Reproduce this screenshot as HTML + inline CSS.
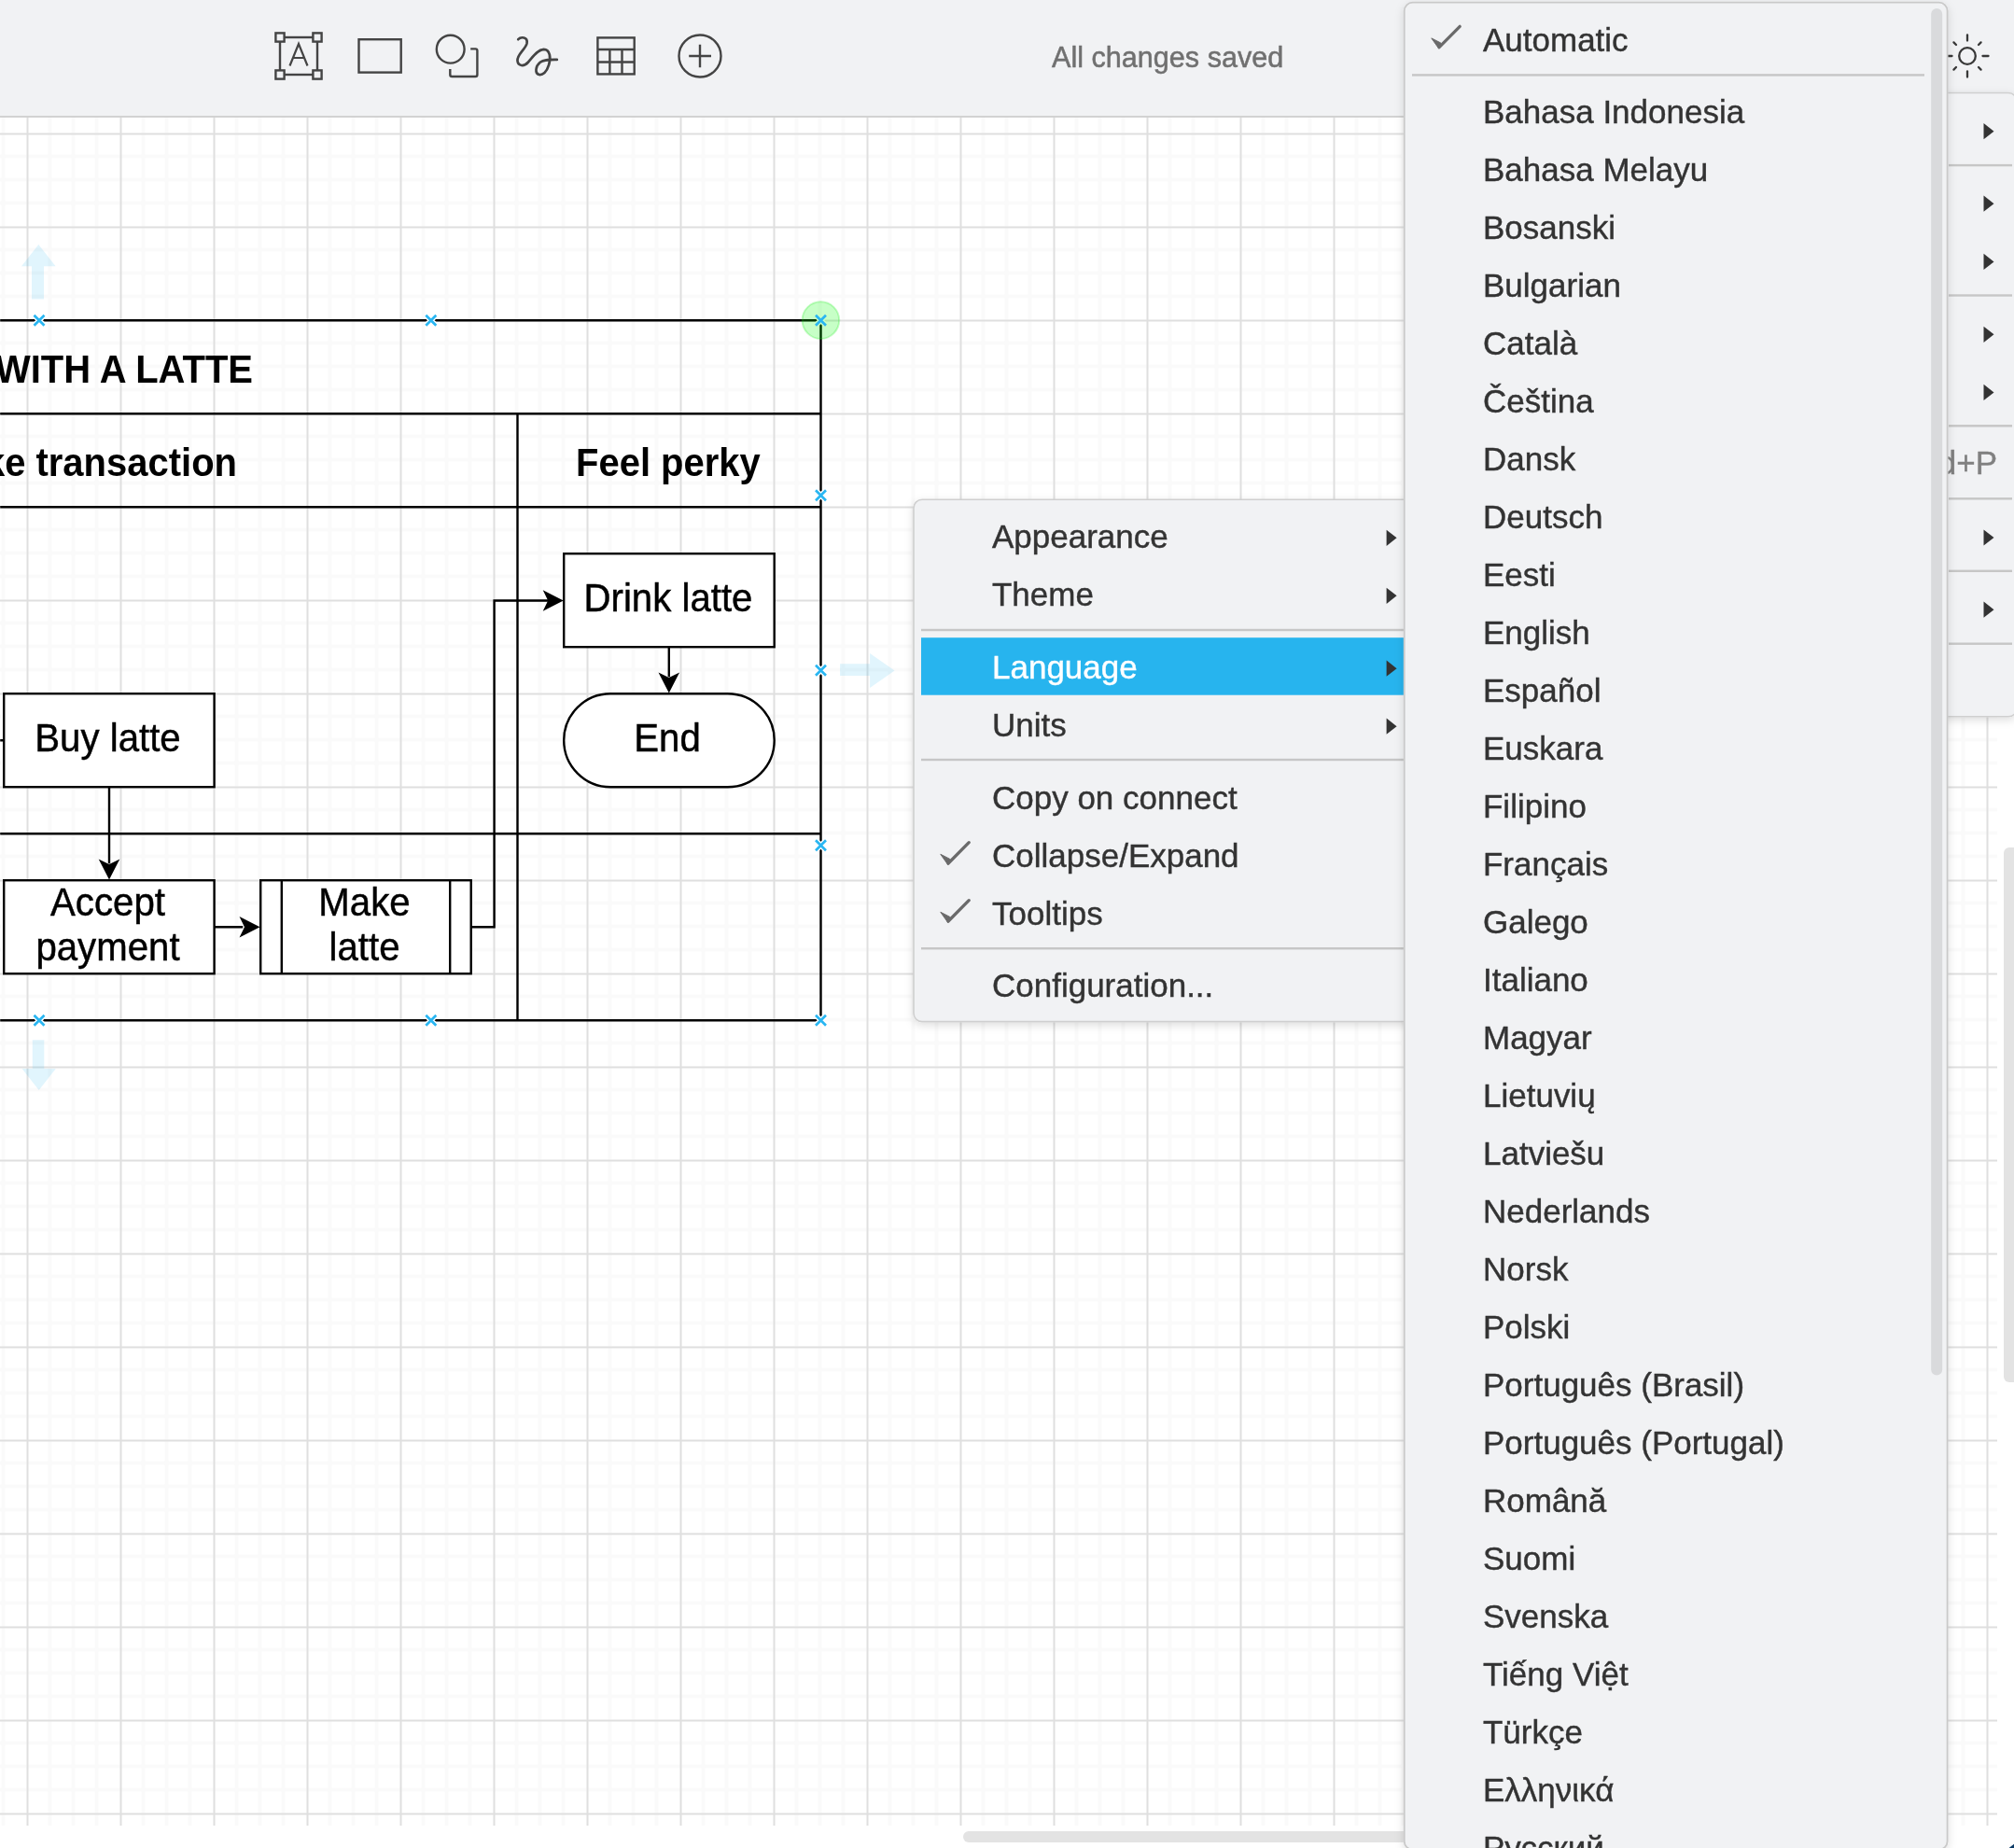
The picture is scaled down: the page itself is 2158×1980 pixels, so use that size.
<!DOCTYPE html><html><head><meta charset="utf-8"><style>html,body{margin:0;padding:0;width:2158px;height:1980px;overflow:hidden;background:#fff}svg{position:absolute;left:0;top:0;will-change:transform}text{font-family:'Liberation Sans',sans-serif}</style></head><body>
<svg width="2158" height="1980" viewBox="0 0 2158 1980">
<defs>
<pattern id="grid" x="28.5" y="142.5" width="100" height="100" patternUnits="userSpaceOnUse">
<rect x="23" y="0" width="4" height="100" fill="#fafafa"/><rect x="48" y="0" width="4" height="100" fill="#fafafa"/><rect x="73" y="0" width="4" height="100" fill="#fafafa"/>
<rect x="0" y="23" width="100" height="4" fill="#fafafa"/><rect x="0" y="48" width="100" height="4" fill="#fafafa"/><rect x="0" y="73" width="100" height="4" fill="#fafafa"/>
<rect x="0" y="0" width="2" height="100" fill="#dfdfdf"/><rect x="0" y="0" width="100" height="2" fill="#dfdfdf"/>
</pattern>
<filter id="msh" x="-10%" y="-10%" width="120%" height="120%"><feDropShadow dx="0" dy="3" stdDeviation="5" flood-color="#000" flood-opacity="0.13"/></filter>
</defs>
<rect x="0" y="0" width="2158" height="1980" fill="#fff"/>
<rect x="0" y="126" width="2140" height="1830" fill="url(#grid)"/>
<rect x="0" y="0" width="2158" height="124" fill="#f1f2f4"/>
<rect x="0" y="124" width="2158" height="2" fill="#d2d2d2"/>
<g fill="none" stroke="#444" stroke-width="2.4">
<rect x="300" y="40" width="40" height="40"/>
<rect x="295.4" y="35.4" width="9.2" height="9.2" fill="#f1f2f4"/>
<rect x="335.4" y="35.4" width="9.2" height="9.2" fill="#f1f2f4"/>
<rect x="295.4" y="75.4" width="9.2" height="9.2" fill="#f1f2f4"/>
<rect x="335.4" y="75.4" width="9.2" height="9.2" fill="#f1f2f4"/>
<path d="M310.5,70.5 L320,47 L329.5,70.5 M314,62 H326" stroke-width="2.2"/>
<rect x="384.5" y="42.2" width="45.2" height="35.4"/>
<circle cx="482.7" cy="52.7" r="14.9"/>
<path d="M504.2,52.4 H509.5 Q511.4,52.4 511.4,54.3 V80 Q511.4,82 509.4,82 H484.3 Q482.3,82 482.3,80 V74"/>
<path transform="translate(540,20) scale(0.1291)" stroke-width="21" stroke-linecap="round" d="M118,172 C140,148 200,150 190,205 C178,255 105,300 112,350 C118,395 165,400 200,362 C240,318 275,258 330,255 C385,255 390,330 372,385 C355,445 320,470 292,465 C255,455 260,395 300,362 C330,338 370,340 440,340"/>
<rect x="640.4" y="40.4" width="39.3" height="39" />
<path d="M640,53 H680 M640,66.5 H680 M653.4,53 V80 M666.5,53 V80"/>
<circle cx="750" cy="60" r="22.5"/><path d="M738.2,60 H762 M750,47.8 V72.3"/>
</g>
<text x="1127" y="72.2" font-size="30.6" fill="#707070" stroke="#707070" stroke-width="0.5">All changes saved</text>
<g stroke="#383838" stroke-width="2.3" fill="none"><circle cx="2108" cy="60" r="8.8"/>
<line x1="2124.50" y1="60.00" x2="2130.50" y2="60.00" stroke-linecap="round"/>
<line x1="2120.02" y1="72.02" x2="2122.57" y2="74.57" stroke-linecap="round"/>
<line x1="2108.00" y1="76.50" x2="2108.00" y2="82.50" stroke-linecap="round"/>
<line x1="2095.98" y1="72.02" x2="2093.43" y2="74.57" stroke-linecap="round"/>
<line x1="2091.50" y1="60.00" x2="2085.50" y2="60.00" stroke-linecap="round"/>
<line x1="2095.98" y1="47.98" x2="2093.43" y2="45.43" stroke-linecap="round"/>
<line x1="2108.00" y1="43.50" x2="2108.00" y2="37.50" stroke-linecap="round"/>
<line x1="2120.02" y1="47.98" x2="2122.57" y2="45.43" stroke-linecap="round"/>
</g>
<g transform="translate(0.2,0.2)">
<g stroke="#000" stroke-width="2.4" fill="none">
<path d="M0,343 H879.3 V1093 H0"/>
<path d="M0,443 H879.3 M0,543 H879.3 M0,893 H879.3 M554.3,443 V1093"/>
<rect x="604" y="593" width="225.5" height="100" fill="#fff"/>
<rect x="604" y="743" width="225.5" height="100" rx="50" ry="50" fill="#fff"/>
<rect x="4" y="743" width="225.4" height="100" fill="#fff"/>
<rect x="4" y="943" width="225.4" height="100" fill="#fff"/>
<rect x="279" y="943" width="225.5" height="100" fill="#fff"/>
<path d="M301.6,943 V1043 M482,943 V1043"/>
<path d="M716.6,693 V725 M116.8,843 V925 M229.4,993 V993 H260 M504.5,993 H529.4 V643.3 H590 M0,793 H4"/>
</g>
<polygon points="603.5,643.3 581.5,632.0 587.0,643.3 581.5,654.6" fill="#000"/>
<polygon points="716.6,742.3 705.3,720.3 716.6,725.8 727.9,720.3" fill="#000"/>
<polygon points="116.8,942.3 105.5,920.3 116.8,925.8 128.1,920.3" fill="#000"/>
<polygon points="278.3,993.0 256.3,981.7 261.8,993.0 256.3,1004.3" fill="#000"/>
</g>
<text transform="translate(271.0,409.8) scale(1,1.045)" x="0" y="0" font-size="40" font-weight="700" fill="#000" text-anchor="end">WITH A LATTE</text>
<text transform="translate(254.0,509.7) scale(1,1.045)" x="0" y="0" font-size="40" font-weight="700" fill="#000" text-anchor="end">ke transaction</text>
<text transform="translate(617.0,509.8) scale(1,1.045)" x="0" y="0" font-size="40" font-weight="700" fill="#000">Feel perky</text>
<text transform="translate(716.0,654.7) scale(1,1.045)" x="0" y="0" font-size="40.2" fill="#000" stroke="#000" stroke-width="0.45" text-anchor="middle">Drink latte</text>
<text transform="translate(715.0,804.8) scale(1,1.045)" x="0" y="0" font-size="40.2" fill="#000" stroke="#000" stroke-width="0.45" text-anchor="middle">End</text>
<text transform="translate(115.5,804.8) scale(1,1.045)" x="0" y="0" font-size="40.2" fill="#000" stroke="#000" stroke-width="0.45" text-anchor="middle">Buy latte</text>
<text transform="translate(115.5,980.8) scale(1,1.045)" x="0" y="0" font-size="40.2" fill="#000" stroke="#000" stroke-width="0.45" text-anchor="middle">Accept</text>
<text transform="translate(115.5,1028.7) scale(1,1.045)" x="0" y="0" font-size="40.2" fill="#000" stroke="#000" stroke-width="0.45" text-anchor="middle">payment</text>
<text transform="translate(390.5,980.8) scale(1,1.045)" x="0" y="0" font-size="40.2" fill="#000" stroke="#000" stroke-width="0.45" text-anchor="middle">Make</text>
<text transform="translate(390.5,1028.7) scale(1,1.045)" x="0" y="0" font-size="40.2" fill="#000" stroke="#000" stroke-width="0.45" text-anchor="middle">latte</text>
<polygon fill="#29b6f2" fill-opacity="0.14" points="23,285.3 41.3,262 59.6,285.3 47,285.3 47,320.6 34,320.6 34,285.3"/>
<polygon fill="#29b6f2" fill-opacity="0.14" points="23.6,1145 41.7,1168 59.8,1145 47.3,1145 47.3,1114.3 34.8,1114.3 34.8,1145"/>
<polygon fill="#29b6f2" fill-opacity="0.14" points="900,711.2 932.1,711.2 932.1,700.1 958.6,718.5 932.1,737.1 932.1,724 900,724"/>
<path d="M36.5,337.7 l11,11 m0,-11 l-11,11" stroke="#fff" stroke-width="5.5"/>
<path d="M456.3,337.7 l11,11 m0,-11 l-11,11" stroke="#fff" stroke-width="5.5"/>
<path d="M874.0,337.7 l11,11 m0,-11 l-11,11" stroke="#fff" stroke-width="5.5"/>
<path d="M874.0,525.2 l11,11 m0,-11 l-11,11" stroke="#fff" stroke-width="5.5"/>
<path d="M874.0,712.7 l11,11 m0,-11 l-11,11" stroke="#fff" stroke-width="5.5"/>
<path d="M874.0,900.2 l11,11 m0,-11 l-11,11" stroke="#fff" stroke-width="5.5"/>
<path d="M874.0,1087.7 l11,11 m0,-11 l-11,11" stroke="#fff" stroke-width="5.5"/>
<path d="M456.3,1087.7 l11,11 m0,-11 l-11,11" stroke="#fff" stroke-width="5.5"/>
<path d="M36.5,1087.7 l11,11 m0,-11 l-11,11" stroke="#fff" stroke-width="5.5"/>
<circle cx="879.4" cy="343.1" r="19.8" fill="#00ff00" fill-opacity="0.22" stroke="#00e600" stroke-opacity="0.22" stroke-width="2"/>
<path d="M36.5,337.7 l11,11 m0,-11 l-11,11" stroke="#29b6f2" stroke-width="2.7"/>
<path d="M456.3,337.7 l11,11 m0,-11 l-11,11" stroke="#29b6f2" stroke-width="2.7"/>
<path d="M874.0,337.7 l11,11 m0,-11 l-11,11" stroke="#29b6f2" stroke-width="2.7"/>
<path d="M874.0,525.2 l11,11 m0,-11 l-11,11" stroke="#29b6f2" stroke-width="2.7"/>
<path d="M874.0,712.7 l11,11 m0,-11 l-11,11" stroke="#29b6f2" stroke-width="2.7"/>
<path d="M874.0,900.2 l11,11 m0,-11 l-11,11" stroke="#29b6f2" stroke-width="2.7"/>
<path d="M874.0,1087.7 l11,11 m0,-11 l-11,11" stroke="#29b6f2" stroke-width="2.7"/>
<path d="M456.3,1087.7 l11,11 m0,-11 l-11,11" stroke="#29b6f2" stroke-width="2.7"/>
<path d="M36.5,1087.7 l11,11 m0,-11 l-11,11" stroke="#29b6f2" stroke-width="2.7"/>
<rect x="1032" y="1962" width="600" height="12" rx="6" fill="#e3e3e3"/>
<rect x="2147" y="908" width="16" height="573" rx="6" fill="#e3e3e3"/>
<g filter="url(#msh)"><rect x="2040" y="99.5" width="121" height="668.3" rx="9" fill="#f1f2f4" stroke="#cfcfcf" stroke-width="1.5"/></g>
<rect x="2088" y="175.9" width="68" height="2.4" fill="#c6c6c6"/>
<rect x="2088" y="315.3" width="68" height="2.4" fill="#c6c6c6"/>
<rect x="2088" y="455.1" width="68" height="2.4" fill="#c6c6c6"/>
<rect x="2088" y="533.1" width="68" height="2.4" fill="#c6c6c6"/>
<rect x="2088" y="610.6" width="68" height="2.4" fill="#c6c6c6"/>
<rect x="2088" y="688.5" width="68" height="2.4" fill="#c6c6c6"/>
<polygon points="2125.5,132.1 2136.5,140.7 2125.5,149.3" fill="#333"/>
<polygon points="2125.5,209.6 2136.5,218.2 2125.5,226.8" fill="#333"/>
<polygon points="2125.5,271.8 2136.5,280.4 2125.5,289.0" fill="#333"/>
<polygon points="2125.5,349.7 2136.5,358.3 2125.5,366.9" fill="#333"/>
<polygon points="2125.5,411.8 2136.5,420.4 2125.5,429.0" fill="#333"/>
<polygon points="2125.5,567.4 2136.5,576.0 2125.5,584.6" fill="#333"/>
<polygon points="2125.5,644.6 2136.5,653.2 2125.5,661.8" fill="#333"/>
<text transform="translate(2140,507.5) scale(1,1.02)" x="0" y="0" font-size="35" fill="#808080" stroke="#808080" stroke-width="0.4" text-anchor="end">Cmd+P</text>
<g filter="url(#msh)"><rect x="979" y="535.3" width="600" height="559.3" rx="9" fill="#f1f2f4" stroke="#cfcfcf" stroke-width="1.6"/></g>
<rect x="987" y="683.2" width="520" height="61.5" fill="#27b4ee"/>
<rect x="987" y="673.8" width="520" height="2.4" fill="#c6c6c6"/>
<rect x="987" y="812.8" width="520" height="2.4" fill="#c6c6c6"/>
<rect x="987" y="1015.0" width="520" height="2.4" fill="#c6c6c6"/>
<text transform="translate(1063,587.3) scale(1,1.02)" x="0" y="0" font-size="35" fill="#333" stroke="#333" stroke-width="0.4">Appearance</text>
<polygon points="1485.6,567.7 1496.6,576.3 1485.6,584.9" fill="#333"/>
<text transform="translate(1063,649.3) scale(1,1.02)" x="0" y="0" font-size="35" fill="#333" stroke="#333" stroke-width="0.4">Theme</text>
<polygon points="1485.6,629.7 1496.6,638.3 1485.6,646.9" fill="#333"/>
<text transform="translate(1063,727.2) scale(1,1.02)" x="0" y="0" font-size="35" fill="#fff" stroke="#fff" stroke-width="0.4">Language</text>
<polygon points="1485.6,707.6 1496.6,716.2 1485.6,724.8" fill="#333"/>
<text transform="translate(1063,789.2) scale(1,1.02)" x="0" y="0" font-size="35" fill="#333" stroke="#333" stroke-width="0.4">Units</text>
<polygon points="1485.6,769.6 1496.6,778.2 1485.6,786.8" fill="#333"/>
<text transform="translate(1063,867.3) scale(1,1.02)" x="0" y="0" font-size="35" fill="#333" stroke="#333" stroke-width="0.4">Copy on connect</text>
<text transform="translate(1063,929.3) scale(1,1.02)" x="0" y="0" font-size="35" fill="#333" stroke="#333" stroke-width="0.4">Collapse/Expand</text>
<polygon points="1007.8,915.3 1017.8,920.4 1015.8,926.6" fill="#6a6a6a" stroke="#6a6a6a" stroke-width="1" stroke-linejoin="round"/>
<line x1="1016.1" y1="925.0" x2="1038.2" y2="902.7" stroke="#6a6a6a" stroke-width="3.3" stroke-linecap="round"/>
<text transform="translate(1063,991.3) scale(1,1.02)" x="0" y="0" font-size="35" fill="#333" stroke="#333" stroke-width="0.4">Tooltips</text>
<polygon points="1007.8,977.3 1017.8,982.4 1015.8,988.6" fill="#6a6a6a" stroke="#6a6a6a" stroke-width="1" stroke-linejoin="round"/>
<line x1="1016.1" y1="987.0" x2="1038.2" y2="964.7" stroke="#6a6a6a" stroke-width="3.3" stroke-linecap="round"/>
<text transform="translate(1063,1068.3) scale(1,1.02)" x="0" y="0" font-size="35" fill="#333" stroke="#333" stroke-width="0.4">Configuration...</text>
<g filter="url(#msh)"><rect x="1504.7" y="2.7" width="581.9" height="1979" rx="9" fill="#f1f2f4" stroke="#c9c9c9" stroke-width="1.8"/></g>
<rect x="2069.2" y="9.1" width="12" height="1464.4" rx="6" fill="#d9dadc"/>
<rect x="1513" y="79.2" width="549" height="2.4" fill="#c6c6c6"/>
<text transform="translate(1589,54.9) scale(1,1.02)" x="0" y="0" font-size="35" fill="#333" stroke="#333" stroke-width="0.4">Automatic</text>
<polygon points="1533.8,40.9 1543.8,46.0 1541.8,52.2" fill="#6a6a6a" stroke="#6a6a6a" stroke-width="1" stroke-linejoin="round"/>
<line x1="1542.1" y1="50.6" x2="1564.2" y2="28.3" stroke="#6a6a6a" stroke-width="3.3" stroke-linecap="round"/>
<text transform="translate(1589,132.1) scale(1,1.02)" x="0" y="0" font-size="35" fill="#333" stroke="#333" stroke-width="0.4">Bahasa Indonesia</text>
<text transform="translate(1589,194.1) scale(1,1.02)" x="0" y="0" font-size="35" fill="#333" stroke="#333" stroke-width="0.4">Bahasa Melayu</text>
<text transform="translate(1589,256.1) scale(1,1.02)" x="0" y="0" font-size="35" fill="#333" stroke="#333" stroke-width="0.4">Bosanski</text>
<text transform="translate(1589,318.1) scale(1,1.02)" x="0" y="0" font-size="35" fill="#333" stroke="#333" stroke-width="0.4">Bulgarian</text>
<text transform="translate(1589,380.1) scale(1,1.02)" x="0" y="0" font-size="35" fill="#333" stroke="#333" stroke-width="0.4">Català</text>
<text transform="translate(1589,442.1) scale(1,1.02)" x="0" y="0" font-size="35" fill="#333" stroke="#333" stroke-width="0.4">Čeština</text>
<text transform="translate(1589,504.1) scale(1,1.02)" x="0" y="0" font-size="35" fill="#333" stroke="#333" stroke-width="0.4">Dansk</text>
<text transform="translate(1589,566.1) scale(1,1.02)" x="0" y="0" font-size="35" fill="#333" stroke="#333" stroke-width="0.4">Deutsch</text>
<text transform="translate(1589,628.1) scale(1,1.02)" x="0" y="0" font-size="35" fill="#333" stroke="#333" stroke-width="0.4">Eesti</text>
<text transform="translate(1589,690.1) scale(1,1.02)" x="0" y="0" font-size="35" fill="#333" stroke="#333" stroke-width="0.4">English</text>
<text transform="translate(1589,752.1) scale(1,1.02)" x="0" y="0" font-size="35" fill="#333" stroke="#333" stroke-width="0.4">Español</text>
<text transform="translate(1589,814.1) scale(1,1.02)" x="0" y="0" font-size="35" fill="#333" stroke="#333" stroke-width="0.4">Euskara</text>
<text transform="translate(1589,876.1) scale(1,1.02)" x="0" y="0" font-size="35" fill="#333" stroke="#333" stroke-width="0.4">Filipino</text>
<text transform="translate(1589,938.1) scale(1,1.02)" x="0" y="0" font-size="35" fill="#333" stroke="#333" stroke-width="0.4">Français</text>
<text transform="translate(1589,1000.1) scale(1,1.02)" x="0" y="0" font-size="35" fill="#333" stroke="#333" stroke-width="0.4">Galego</text>
<text transform="translate(1589,1062.1) scale(1,1.02)" x="0" y="0" font-size="35" fill="#333" stroke="#333" stroke-width="0.4">Italiano</text>
<text transform="translate(1589,1124.1) scale(1,1.02)" x="0" y="0" font-size="35" fill="#333" stroke="#333" stroke-width="0.4">Magyar</text>
<text transform="translate(1589,1186.1) scale(1,1.02)" x="0" y="0" font-size="35" fill="#333" stroke="#333" stroke-width="0.4">Lietuvių</text>
<text transform="translate(1589,1248.1) scale(1,1.02)" x="0" y="0" font-size="35" fill="#333" stroke="#333" stroke-width="0.4">Latviešu</text>
<text transform="translate(1589,1310.1) scale(1,1.02)" x="0" y="0" font-size="35" fill="#333" stroke="#333" stroke-width="0.4">Nederlands</text>
<text transform="translate(1589,1372.1) scale(1,1.02)" x="0" y="0" font-size="35" fill="#333" stroke="#333" stroke-width="0.4">Norsk</text>
<text transform="translate(1589,1434.1) scale(1,1.02)" x="0" y="0" font-size="35" fill="#333" stroke="#333" stroke-width="0.4">Polski</text>
<text transform="translate(1589,1496.1) scale(1,1.02)" x="0" y="0" font-size="35" fill="#333" stroke="#333" stroke-width="0.4">Português (Brasil)</text>
<text transform="translate(1589,1558.1) scale(1,1.02)" x="0" y="0" font-size="35" fill="#333" stroke="#333" stroke-width="0.4">Português (Portugal)</text>
<text transform="translate(1589,1620.1) scale(1,1.02)" x="0" y="0" font-size="35" fill="#333" stroke="#333" stroke-width="0.4">Română</text>
<text transform="translate(1589,1682.1) scale(1,1.02)" x="0" y="0" font-size="35" fill="#333" stroke="#333" stroke-width="0.4">Suomi</text>
<text transform="translate(1589,1744.1) scale(1,1.02)" x="0" y="0" font-size="35" fill="#333" stroke="#333" stroke-width="0.4">Svenska</text>
<text transform="translate(1589,1806.1) scale(1,1.02)" x="0" y="0" font-size="35" fill="#333" stroke="#333" stroke-width="0.4">Tiếng Việt</text>
<text transform="translate(1589,1868.1) scale(1,1.02)" x="0" y="0" font-size="35" fill="#333" stroke="#333" stroke-width="0.4">Türkçe</text>
<text transform="translate(1589,1930.1) scale(1,1.02)" x="0" y="0" font-size="35" fill="#333" stroke="#333" stroke-width="0.4">Ελληνικά</text>
<text transform="translate(1589,1992.1) scale(1,1.02)" x="0" y="0" font-size="35" fill="#333" stroke="#333" stroke-width="0.4">Русский</text>
<polygon points="2152,1980.5 2158.5,1975.3 2158.5,1980.5" fill="#0b3a66"/>
</svg></body></html>
